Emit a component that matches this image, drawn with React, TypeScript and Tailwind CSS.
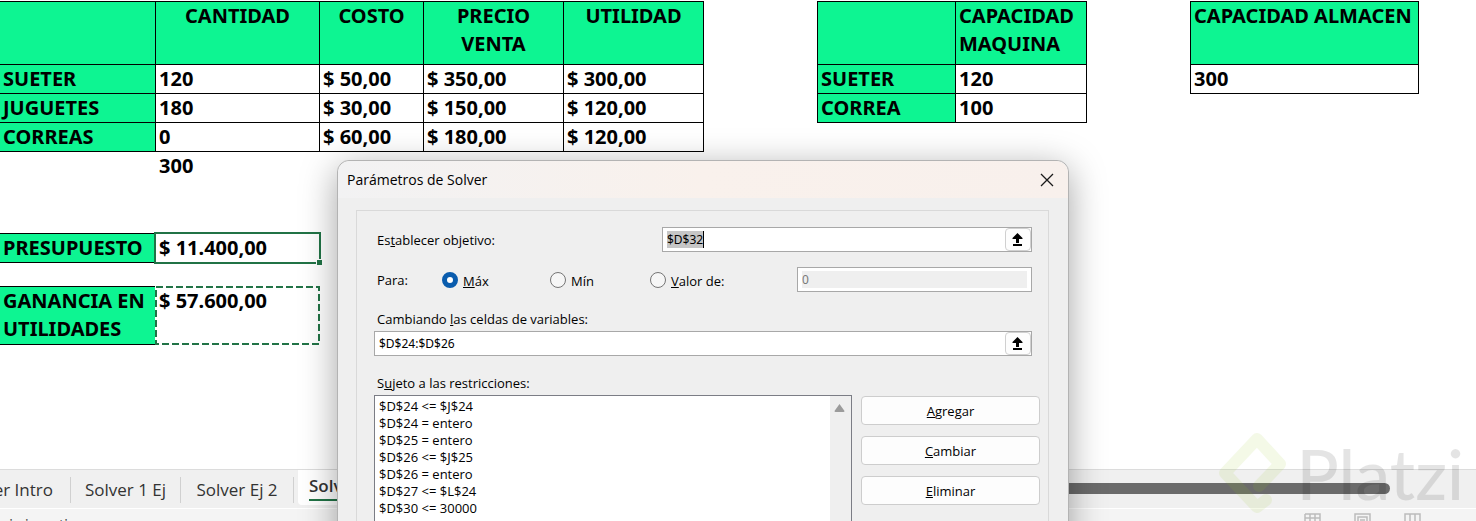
import type { ReactNode } from 'react'

const productos = [
  { nombre: 'SUETER', cantidad: '120', costo: '$ 50,00', precio: '$ 350,00', utilidad: '$ 300,00' },
  { nombre: 'JUGUETES', cantidad: '180', costo: '$ 30,00', precio: '$ 150,00', utilidad: '$ 120,00' },
  { nombre: 'CORREAS', cantidad: '0', costo: '$ 60,00', precio: '$ 180,00', utilidad: '$ 120,00' },
]

const restricciones = [
  '$D$24 <= $J$24',
  '$D$24 = entero',
  '$D$25 = entero',
  '$D$26 <= $J$25',
  '$D$26 = entero',
  '$D$27 <= $L$24',
  '$D$30 <= 30000',
]

const tableClass = 'table-fixed border-separate border-spacing-0 border-t border-black text-left'
const headClass = 'h-[63px] border-r border-b border-black bg-[#0df592] p-0 px-[3px] align-top leading-7 font-bold'
const labelClass = 'h-[29px] border-r border-b border-black bg-[#0df592] p-0 px-[3px] leading-7 font-bold'
const cellClass = 'h-[29px] border-r border-b border-black p-0 px-[3px] leading-7'

function RangeButton({ label }: { label: string }) {
  return (
    <button
      type="button"
      aria-label={label}
      className="flex h-[23px] w-[26px] shrink-0 items-center justify-center rounded border border-[#d0d0d0] bg-[#fdfdfd] pr-px"
    >
      <svg width="11" height="13" viewBox="0 0 11 13" fill="black">
        <path d="M5.5 0 10.5 5v1H7v4H4V6H.5V5zM1 11h9v2H1z" />
      </svg>
    </button>
  )
}

function Radio({ id, checked, children }: { id: string; checked?: boolean; children: ReactNode }) {
  return (
    <div className="flex items-center gap-[5px]">
      <input
        type="radio"
        id={id}
        name="para"
        defaultChecked={checked}
        className="size-4 shrink-0 appearance-none rounded-full border border-[#757575] bg-[#f6f6f6] checked:border-5 checked:border-[#0a5cad] checked:bg-white"
      />
      <label htmlFor={id} className="pt-[3px]">
        {children}
      </label>
    </div>
  )
}

function SolverDialog() {
  return (
    <section
      role="dialog"
      aria-labelledby="solver-title"
      className="absolute top-[160px] left-[337px] h-[640px] w-[732px] rounded-xl border border-[#b3b3b3] bg-[#efefef] font-['Open_Sans',sans-serif] text-[13px] leading-4 text-black shadow-[0_8px_36px_rgba(0,0,0,0.36)]"
    >
      <header className="flex h-[37px] items-center justify-between rounded-t-xl bg-linear-to-r from-[#f2f2f3] via-[#f9f1ec] to-[#f8f0ec] pr-[14px] pl-[9px]">
        <h1 id="solver-title" className="text-sm">
          Parámetros de Solver
        </h1>
        <button type="button" aria-label="Cerrar">
          <svg width="14" height="14" viewBox="0 0 14 14" stroke="#1a1a1a" strokeWidth="1.3">
            <path d="M1 1 13 13M13 1 1 13" />
          </svg>
        </button>
      </header>

      <div className="mr-[19px] ml-[18px] mt-3 h-[560px] border border-[#d9d9d9] pt-4 pr-4 pl-[17px]">
        <div className="flex items-center justify-between pl-[3px]">
          <label htmlFor="objetivo">
            Es<u>t</u>ablecer objetivo:
          </label>
          <div className="flex h-[25px] w-[370px] items-center border border-[#a8a8a8] bg-white pl-1">
            <div className="flex min-w-0 flex-1 items-center">
              <input
                id="objetivo"
                defaultValue="$D$32"
                className="field-sizing-content h-[17px] border-r border-black bg-[#c6c6c6] font-['Noto_Sans',sans-serif] text-xs outline-none"
              />
            </div>
            <RangeButton label="Seleccionar celda objetivo" />
          </div>
        </div>

        <div className="mt-[15px] flex items-center pl-[3px]">
          <span className="w-[65px]">Para:</span>
          <div className="w-[108px]">
            <Radio id="max" checked>
              <u>M</u>áx
            </Radio>
          </div>
          <div className="w-[100px]">
            <Radio id="min">Mín</Radio>
          </div>
          <Radio id="valor">
            <u>V</u>alor de:
          </Radio>
          <div className="ml-auto h-[25px] w-[235px] border border-[#a8a8a8] bg-white py-[3px] pr-1 pl-1">
            <input
              aria-label="Valor de"
              defaultValue="0"
              disabled
              className="block h-[17px] w-full bg-[#efefef] font-['Noto_Sans',sans-serif] text-xs text-[#7a7a7a]"
            />
          </div>
        </div>

        <label htmlFor="celdas" className="mt-[19px] block pl-[3px]">
          Cambiando <u>l</u>as celdas de variables:
        </label>
        <div className="mt-1 flex h-[25px] items-center border border-[#a8a8a8] bg-white pl-1">
          <input
            id="celdas"
            defaultValue="$D$24:$D$26"
            className="min-w-0 flex-1 font-['Noto_Sans',sans-serif] text-xs outline-none"
          />
          <RangeButton label="Seleccionar celdas variables" />
        </div>

        <h2 className="mt-[19px] pl-[3px]">
          S<u>u</u>jeto a las restricciones:
        </h2>
        <div className="-mr-2 mt-1 flex gap-[9px]">
          <div className="flex h-[200px] min-w-0 flex-1 justify-between border border-[#7b7d85] bg-white">
            <ul className="pt-0.5 pl-1 leading-[17px]">
              {restricciones.map((restriccion) => (
                <li key={restriccion}>{restriccion}</li>
              ))}
            </ul>
            <div className="flex w-[21px] justify-center bg-[#efefef] pt-2 pr-0.5">
              <svg width="11" height="8" viewBox="0 0 11 8" fill="#9b9b9b">
                <path d="M5.5 0 10.5 7q0 1-1 1h-8q-1 0-1-1z" />
              </svg>
            </div>
          </div>
          <div className="flex w-[179px] flex-col gap-[11px] pt-px">
            <button type="button" className="h-[29px] rounded border border-[#cdcdcd] bg-[#fdfdfd]">
              <u>A</u>gregar
            </button>
            <button type="button" className="h-[29px] rounded border border-[#cdcdcd] bg-[#fdfdfd]">
              <u>C</u>ambiar
            </button>
            <button type="button" className="h-[29px] rounded border border-[#cdcdcd] bg-[#fdfdfd]">
              <u>E</u>liminar
            </button>
          </div>
        </div>
      </div>
    </section>
  )
}

function Watermark() {
  return (
    <div className="pointer-events-none absolute right-3 bottom-[7px] flex items-center gap-2 opacity-10">
      <svg width="70" height="82" viewBox="0 0 70 82" fill="none" stroke="#98ca1f" strokeWidth="12" strokeLinejoin="round" strokeLinecap="round">
        <path d="M48 68 39 75 7 41 39 7 62 32 41 54" />
      </svg>
      <span className="font-['Lato',sans-serif] text-[70px] leading-[76px] font-medium text-black">Platzi</span>
    </div>
  )
}

export default function App() {
  return (
    <div className="relative flex h-screen flex-col overflow-hidden bg-white font-['Noto_Sans',sans-serif] text-black">
      <main className="flex min-h-0 flex-1 items-start pt-px text-xl leading-7 font-bold">
        <div className="shrink-0">
          <table className={`${tableClass} w-[704px]`}>
            <colgroup>
              <col className="w-[156px]" />
              <col className="w-[164px]" />
              <col className="w-[104px]" />
              <col className="w-[140px]" />
              <col className="w-[140px]" />
            </colgroup>
            <thead>
              <tr className="text-center">
                <td className={headClass} />
                <th className={headClass}>CANTIDAD</th>
                <th className={headClass}>COSTO</th>
                <th className={headClass}>PRECIO VENTA</th>
                <th className={headClass}>UTILIDAD</th>
              </tr>
            </thead>
            <tbody>
              {productos.map((producto) => (
                <tr key={producto.nombre}>
                  <th className={labelClass}>{producto.nombre}</th>
                  <td className={cellClass}>{producto.cantidad}</td>
                  <td className={cellClass}>{producto.costo}</td>
                  <td className={cellClass}>{producto.precio}</td>
                  <td className={cellClass}>{producto.utilidad}</td>
                </tr>
              ))}
            </tbody>
          </table>
          <p className="h-[29px] pl-[159px]">300</p>

          <div className="mt-[51px] flex">
            <div className="my-px h-[30px] w-[154px] border-y border-black bg-[#0df592] pl-[3px]">PRESUPUESTO</div>
            <div className="relative h-8 w-[167px] border-2 border-[#217346] pl-[3px]">
              $ 11.400,00
              <span className="absolute -right-[3px] -bottom-[3px] size-[6px] border-t border-l border-white bg-[#217346]" />
            </div>
          </div>

          <div className="mt-[22px] flex">
            <div className="h-[59px] w-[155px] border-y border-black bg-[#0df592] pl-[3px]">
              GANANCIA EN UTILIDADES
            </div>
            <div className="relative h-[59px] w-[165px] pt-px pl-1">
              $ 57.600,00
              <svg className="absolute inset-0" width="165" height="59" fill="none" stroke="#217346" strokeWidth="2" strokeDasharray="7 3">
                <rect x="1" y="1" width="163" height="57" />
              </svg>
            </div>
          </div>
        </div>

        <table className={`${tableClass} ml-[113px] w-[270px] shrink-0 border-l`}>
          <colgroup>
            <col className="w-[138px]" />
            <col className="w-[131px]" />
          </colgroup>
          <thead>
            <tr>
              <td className={headClass} />
              <th className={headClass}>CAPACIDAD MAQUINA</th>
            </tr>
          </thead>
          <tbody>
            <tr>
              <th className={labelClass}>SUETER</th>
              <td className={cellClass}>120</td>
            </tr>
            <tr>
              <th className={labelClass}>CORREA</th>
              <td className={cellClass}>100</td>
            </tr>
          </tbody>
        </table>

        <table className={`${tableClass} ml-[103px] w-[229px] shrink-0 border-l`}>
          <thead>
            <tr>
              <th className={headClass}>CAPACIDAD ALMACEN</th>
            </tr>
          </thead>
          <tbody>
            <tr>
              <td className={cellClass}>300</td>
            </tr>
          </tbody>
        </table>
      </main>

      <nav className="flex h-10 shrink-0 items-start border-t border-b border-t-[#dcdcdc] border-b-white bg-[#f0f0f0] font-['Open_Sans',sans-serif] text-[17px] leading-10 text-[#333]">
        <a href="#intro" className="my-[7px] flex w-[71px] justify-end border-r border-[#d0d0d0] pr-[17px] leading-[26px] whitespace-nowrap">
          Solver Intro
        </a>
        <a href="#ej1" className="my-[7px] w-[110px] border-r border-[#d0d0d0] text-center leading-[26px]">
          Solver 1 Ej
        </a>
        <a href="#ej2" className="my-[7px] w-[113px] border-r border-[#d0d0d0] text-center leading-[26px]">
          Solver Ej 2
        </a>
        <a href="#ej3" className="ml-1 h-[35px] w-[60px] rounded-b bg-white pl-[11px] leading-8 font-semibold">
          <span className="block h-[31px] border-b-2 border-[#217346]">Solv</span>
        </a>
        <div className="mt-[13px] mr-[86px] ml-auto h-[11px] w-[600px] rounded-full bg-[#6b6b6b]" />
      </nav>
      <footer className="flex h-3 shrink-0 items-start overflow-hidden bg-[#f4f4f4] text-sm text-[#333]">
        <span className="flex w-[90px] justify-end pt-1.5 leading-5 whitespace-nowrap">es necesario investigar</span>
        <div className="mt-1 mr-[55px] ml-auto flex gap-[33px] text-[#bcbcbc]">
          <svg width="17" height="14" viewBox="0 0 17 14" fill="none" stroke="currentColor" strokeWidth="1.5">
            <path d="M1 1H16V14M1 1V14M6 1V14M11 1V14M1 5H16M1 9H16" />
          </svg>
          <svg width="17" height="14" viewBox="0 0 17 14" fill="none" stroke="currentColor" strokeWidth="1.5">
            <path d="M1 14V1H16V14M4 14V4H13V14M6 7H11" />
          </svg>
          <svg width="17" height="14" viewBox="0 0 17 14" fill="none" stroke="currentColor" strokeWidth="1.5">
            <path d="M1 14V1H16V14M6 1V14M11 1V14" />
          </svg>
        </div>
      </footer>

      <SolverDialog />
      <Watermark />
    </div>
  )
}
